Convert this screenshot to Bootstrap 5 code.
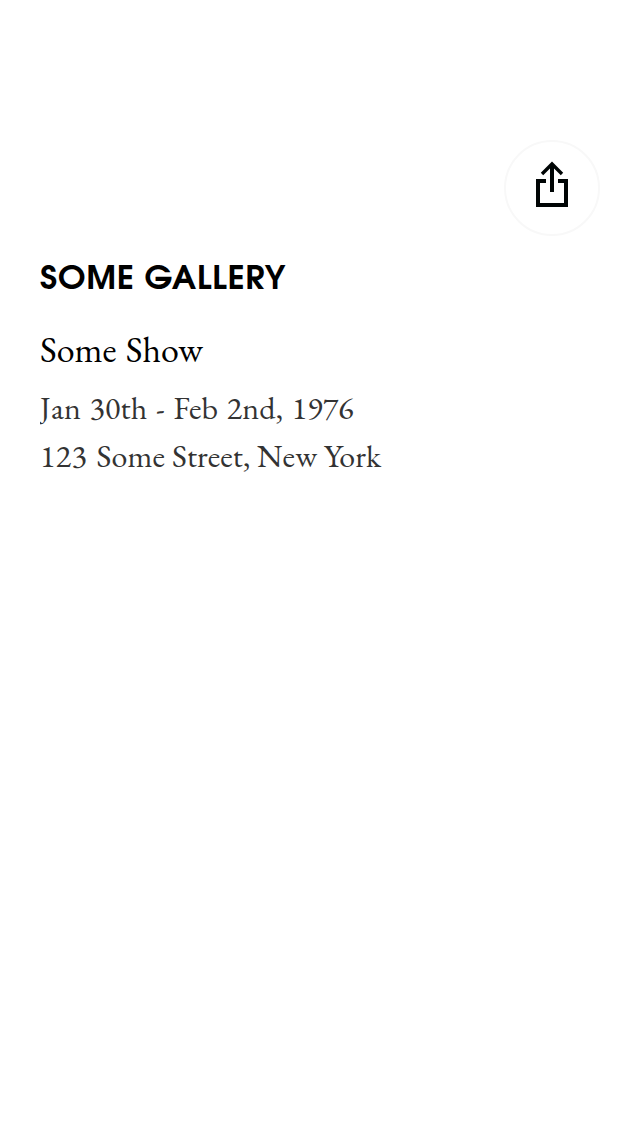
<!DOCTYPE html>
<html lang="en">
<head>
<meta charset="utf-8">
<meta name="viewport" content="width=device-width, initial-scale=1">
<title>Some Gallery</title>
<link href="https://cdn.jsdelivr.net/npm/bootstrap@5.3.0/dist/css/bootstrap.min.css" rel="stylesheet">
<style>
  .show-page { padding: 140px 40px 0; }
  .share-btn { width: 96px; height: 96px; border: 2px solid #f8f8f8; }
  .gallery-name { font: 600 33px/40px "ITC Avant Garde Gothic", "URW Gothic", "TeX Gyre Adventor", "League Spartan", Jost, Outfit, "Century Gothic", Lato, sans-serif; margin-top: 24px; letter-spacing: .72px; }
  .show-info { font-family: "EB Garamond", "Liberation Serif", serif; color: #333; }
  .show-name { font-size: 36px; line-height: 48px; margin-top: 26px; word-spacing: 2px; }
  .show-line { font-size: 32px; line-height: 48px; word-spacing: 2px; letter-spacing: .15px; }
  .show-dates { margin-top: 10px; overflow: hidden; }
  .show-address { word-spacing: .2px; letter-spacing: .12px; }
  .street-number { word-spacing: 2.5px; letter-spacing: .4px; }
</style>
</head>
<body class="bg-white">
<main class="show-page d-flex flex-column text-nowrap">
  <button type="button" class="share-btn btn rounded-circle bg-white p-0 align-self-end d-flex align-items-center justify-content-center" aria-label="Share">
    <svg width="92" height="92" viewBox="506 142 92 92" fill="none" stroke="#000505" stroke-width="4">
      <path d="M546 181H538V205H566V181H558M552 192V165"/>
      <path d="M542 174L552 164L562 174" stroke-width="3.4"/>
    </svg>
  </button>
  <h1 class="gallery-name mb-0 text-black"><span>SOME GALLERY</span></h1>
  <section class="show-info">
    <h2 class="show-name fw-normal mb-0 text-black"><span>Some Show</span></h2>
    <p class="show-line show-dates mb-0"><span>Jan 30th - Feb 2nd, 1976</span></p>
    <p class="show-line show-address mb-0"><span class="street-number">123 </span>Some Street, New York</p>
  </section>
</main>
<script src="https://cdn.jsdelivr.net/npm/bootstrap@5.3.0/dist/js/bootstrap.bundle.min.js"></script>
</body>
</html>
